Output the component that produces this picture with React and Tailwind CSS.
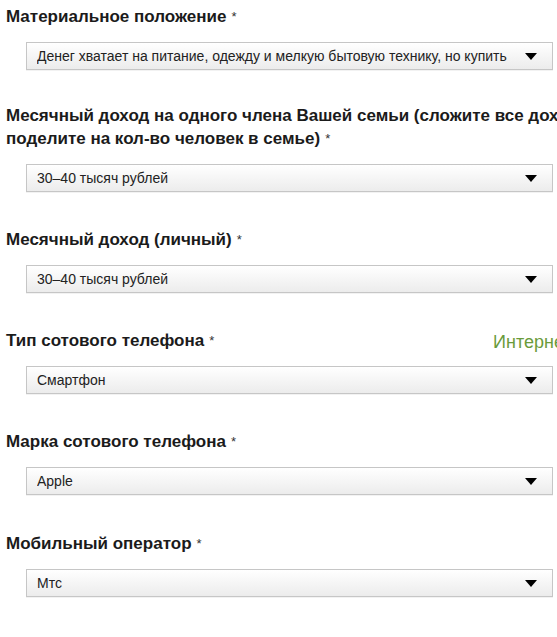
import React from "react";

const fields = [
  {
    label: ["Материальное положение"],
    value: "Денег хватает на питание, одежду и мелкую бытовую технику, но купить автомобиль или квартиру затруднительно",
    gap: "mb-[34px]",
  },
  {
    label: [
      "Месячный доход на одного члена Вашей семьи (сложите все доходы и",
      "поделите на кол-во человек в семье)",
    ],
    value: "30–40 тысяч рублей",
    gap: "mb-[36px]",
  },
  { label: ["Месячный доход (личный)"], value: "30–40 тысяч рублей", gap: "mb-[36px]" },
  { label: ["Тип сотового телефона"], value: "Смартфон", aside: "Интернет", gap: "mb-[36px]" },
  { label: ["Марка сотового телефона"], value: "Apple", gap: "mb-[37px]" },
  { label: ["Мобильный оператор"], value: "Мтс", gap: "mb-[36px]" },
];

function Select({ value }) {
  return (
    <div className="ml-[26px] w-[527px] h-[28px] flex items-center border border-[#c6c6c6] bg-gradient-to-b from-white to-[#ececec] shadow-[0_1px_0_#f2f2f2]">
      <span className="flex-1 min-w-0 ml-[10px] mr-[17px] overflow-hidden whitespace-nowrap text-[14px] text-[#222]">
        {value}
      </span>
      <svg width="12" height="7" viewBox="0 0 12 7" className="mr-[15px] shrink-0">
        <path d="M0 0h12L6 7z" fill="#000" />
      </svg>
    </div>
  );
}

export default function App() {
  return (
    <div
      className="w-[557px] h-[637px] overflow-hidden bg-white pt-[5px]"
      style={{ fontFamily: '"Liberation Sans", Arial, sans-serif' }}
    >
      {fields.map((f, i) => (
        <div key={i} className={f.gap}>
          <div className="flex items-start w-[700px]">
            <div className="w-[493px] shrink-0 pl-[6px] text-[17px] leading-[23px] font-bold text-[#1b1b1b] whitespace-nowrap">
              {f.label.map((line, j) => (
                <div key={j}>
                  {line}
                  {j === f.label.length - 1 && (
                    <span className="font-normal text-[13px] align-top ml-[5px] text-[#333]">*</span>
                  )}
                </div>
              ))}
            </div>
            {f.aside && (
              <div className="mt-[3px] text-[18px] leading-[20px] text-[#6a9b3b] whitespace-nowrap">
                {f.aside}
              </div>
            )}
          </div>
          <div className="mt-[14px]">
            <Select value={f.value} />
          </div>
        </div>
      ))}
    </div>
  );
}
